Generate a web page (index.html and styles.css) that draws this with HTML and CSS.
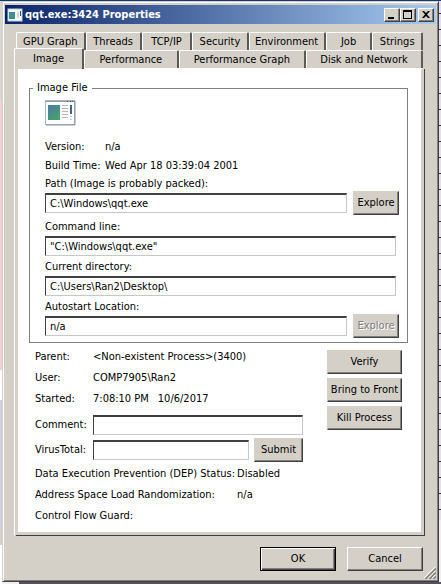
FILE: index.html
```html
<!DOCTYPE html>
<html lang="en">
<head>
<meta charset="utf-8">
<title>qqt.exe:3424 Properties</title>
<link rel="stylesheet" href="styles.css">
</head>
<body>
<main class="window">
  <header class="titlebar">
    <svg class="app-icon" width="16" height="14" viewBox="0 0 16 14" aria-hidden="true">
      <rect x="1" y="1" width="14" height="12" fill="#f7f8f8" stroke="#c9d0d8"/>
      <rect x="2" y="4" width="6" height="7" fill="#3f8f92"/>
      <path d="M10 5h2M10 7h2M10 9h2" stroke="#b5b5b5"/>
      <rect x="13" y="3" width="1" height="5" fill="#35517e"/>
    </svg>
    <h1 class="title">qqt.exe:3424 Properties</h1>
    <div class="caption-buttons">
      <button type="button" class="caption" aria-label="Minimize"><svg width="12" height="11" viewBox="0 0 12 11"><path d="M2 8h6v2H2z"/></svg></button>
      <button type="button" class="caption" aria-label="Maximize"><svg width="12" height="11" viewBox="0 0 12 11"><path fill-rule="evenodd" d="M1 1h9v9H1zM2 3v6h7V3z"/></svg></button>
      <button type="button" class="caption close" aria-label="Close"><svg width="12" height="11" viewBox="0 0 12 11"><path d="M2 2h2l2 2 2-2h2L7 5.500l3 3.500H8L6 7 4 9H2l3-3.500z"/></svg></button>
    </div>
  </header>
  <div class="content">
    <div class="tabs" role="tablist">
      <div class="tab-row back">
        <button type="button" role="tab" class="tab gpu">GPU Graph</button>
        <button type="button" role="tab" class="tab threads">Threads</button>
        <button type="button" role="tab" class="tab tcp">TCP/IP</button>
        <button type="button" role="tab" class="tab security">Security</button>
        <button type="button" role="tab" class="tab environment">Environment</button>
        <button type="button" role="tab" class="tab job">Job</button>
        <button type="button" role="tab" class="tab strings">Strings</button>
      </div>
      <div class="tab-row front">
        <button type="button" role="tab" class="tab image" aria-selected="true">Image</button>
        <button type="button" role="tab" class="tab performance">Performance</button>
        <button type="button" role="tab" class="tab perf-graph">Performance Graph</button>
        <button type="button" role="tab" class="tab disk">Disk and Network</button>
      </div>
    </div>
    <section class="page" role="tabpanel">
      <fieldset class="group">
        <legend>Image File</legend>
        <svg class="file-icon" width="32" height="27" viewBox="0 0 32 27" aria-hidden="true">
          <defs><linearGradient id="pic" x1="0" y1="0" x2="0.600" y2="1"><stop offset="0" stop-color="#4a7ba6"/><stop offset="1" stop-color="#45a06b"/></linearGradient></defs>
          <rect x="0.500" y="0.500" width="29" height="24" fill="#fbfcfc" stroke="#a9b2ba"/>
          <path d="M1 25h29V1" fill="none" stroke="#8d969e"/>
          <path d="M1 1.500h28" stroke="#8fa0ae"/>
          <path d="M22 1.500h1M25 1.500h1M27 1.500h1" stroke="#3f5468"/>
          <rect x="3" y="5" width="12" height="15" fill="url(#pic)"/>
          <path d="M17 5.500h6M17 8.500h6M17 11.500h6M17 14.500h6M17 17.500h6" stroke="#c6b4b4"/>
          <rect x="25" y="5" width="2" height="9" fill="#47648c"/>
          <path d="M25 16.500h2M25 19.500h2" stroke="#c4ccd4"/>
        </svg>
        <dl class="facts file-facts">
          <dt>Version:</dt><dd>n/a</dd>
          <dt>Build Time:</dt><dd>Wed Apr 18 03:39:04 2001</dd>
        </dl>
        <label for="path">Path (Image is probably packed):</label>
        <div class="field-row path-row"><input id="path" type="text" readonly value="C:\Windows\qqt.exe"><button type="button" class="btn flat">Explore</button></div>
        <label for="cmd">Command line:</label>
        <div class="field-row wide"><input id="cmd" type="text" readonly value="&quot;C:\Windows\qqt.exe&quot;"></div>
        <label for="dir">Current directory:</label>
        <div class="field-row wide"><input id="dir" type="text" readonly value="C:\Users\Ran2\Desktop\"></div>
        <label for="auto">Autostart Location:</label>
        <div class="field-row"><input id="auto" type="text" readonly value="n/a"><button type="button" class="btn flat" disabled>Explore</button></div>
      </fieldset>
      <div class="process">
        <div class="details">
          <dl class="facts">
            <dt>Parent:</dt><dd>&lt;Non-existent Process&gt;(3400)</dd>
            <dt>User:</dt><dd>COMP7905\Ran2</dd>
            <dt>Started:</dt><dd class="times"><span>7:08:10 PM</span><span>10/6/2017</span></dd>
          </dl>
          <div class="form">
            <div class="form-row"><label for="comment">Comment:</label><input id="comment" type="text"></div>
            <div class="form-row"><label for="vt">VirusTotal:</label><input id="vt" type="text"><button type="button" class="btn flat submit">Submit</button></div>
          </div>
        </div>
        <div class="actions">
          <button type="button" class="btn flat">Verify</button>
          <button type="button" class="btn flat">Bring to Front</button>
          <button type="button" class="btn flat">Kill Process</button>
        </div>
      </div>
      <dl class="facts security-facts">
        <dt>Data Execution Prevention (DEP) Status:</dt><dd>Disabled</dd>
        <dt>Address Space Load Randomization:</dt><dd>n/a</dd>
        <dt>Control Flow Guard:</dt><dd></dd>
      </dl>
    </section>
    <footer class="footer">
      <button type="button" class="btn default">OK</button>
      <button type="button" class="btn">Cancel</button>
    </footer>
  </div>
  <svg class="grip" width="12" height="12" viewBox="0 0 12 12" aria-hidden="true">
    <path d="M0 11L11 0M4 11l7-7M8 11l3-3" stroke="#fff"/>
    <path d="M1.500 12L12 1.500M5.500 12L12 5.500M9.500 12L12 9.500" stroke="#808080" stroke-width="1.500"/>
  </svg>
</main>
</body>
</html>
```
FILE: styles.css
```css
* { box-sizing: border-box; }

:root {
  --face: #d4d0c8;
  --shadow: #808080;
  --dark: #404040;
}

body {
  margin: 0;
  padding: 1px 2px 2px;
  min-height: 100vh;
  display: flex;
  font: 11px/14px "DejaVu Sans Condensed", "DejaVu Sans", sans-serif;
  color: #000;
  background:
    linear-gradient(#0b3c78, #0b3c78) top / 100% 1px no-repeat,
    linear-gradient(#55525a, #55525a) 19px 100% / 100% 2px no-repeat,
    repeating-linear-gradient(#e4dfea 0 13px, #333 13px 14px, #e4dfea 14px 16px) right top / 2px 520px no-repeat,
    linear-gradient(#d8d4d0 0 100px, #f2d0d4 100px 370px, #fff 370px 400px, #cfcde2 400px 528px, #d4d0c8 528px 545px, #fff 545px) left / 2px 100% no-repeat,
    #f0eeee;
}

button, input { font: inherit; color: inherit; border-radius: 0; }
h1, dl, dd, fieldset { margin: 0; }

.window {
  position: relative;
  flex: 1;
  display: flex;
  flex-direction: column;
  padding: 2px;
  background: var(--face);
  border: 1px solid;
  border-color: var(--face) var(--dark) var(--dark) var(--face);
  box-shadow: inset 1px 1px #fff, inset -1px -1px var(--shadow);
}

.titlebar {
  display: flex;
  align-items: center;
  height: 19px;
  margin-top: 1px;
  padding: 0 2px;
  gap: 2px;
  color: #fff;
  background: linear-gradient(90deg, #0a246a, #a6caf0);
}

.title { flex: 1; font: bold 11px/14px "DejaVu Sans Condensed", "DejaVu Sans", sans-serif; }
.caption-buttons { display: flex; }

.caption {
  width: 16px;
  height: 14px;
  padding: 0;
  display: flex;
  align-items: center;
  justify-content: center;
  background: var(--face);
  border: 1px solid;
  border-color: #fff var(--dark) var(--dark) #fff;
  box-shadow: inset -1px -1px var(--shadow);
}
.caption.close { margin-left: 2px; }

.content { flex: 1; display: flex; flex-direction: column; padding: 8px 12px 8px 9px; }

.tab-row { display: flex; height: 18px; padding: 0 1px 0 2px; }

.tab {
  padding: 0;
  text-align: center;
  background: var(--face);
  border: 1px solid;
  border-width: 1px 2px 0 1px;
  border-color: #fff #5c5a56 #fff #fff;
  border-radius: 2px 2px 0 0;
}

.gpu { flex: 70; }
.threads { flex: 56; }
.tcp { flex: 50; }
.security { flex: 56; }
.environment { flex: 78; }
.job { flex: 46; }
.strings { flex: 50; }
.front { padding-left: 0; }
.image { flex: 69; position: relative; z-index: 1; margin: -2px 0 -1px; }
.performance { flex: 94; }
.perf-graph { flex: 128; }
.disk { flex: 117; }

.page {
  flex: 1;
  margin: 0 0 0 1px;
  padding: 12px 13px 0 11px;
  background: #fff;
  border: 3px solid;
  border-color: #fff var(--face) var(--face) var(--face);
  border-top-width: 1px;
  box-shadow: 1px 1px var(--dark), -1px 0 #fff;
}

.group {
  min-width: 0;
  padding: 5px 8px 2px 15px;
  border: 1px solid var(--shadow);
  display: flex;
  flex-direction: column;
}
.group legend { padding: 0 4px; margin-left: -12px; }
.file-icon { margin-bottom: 13px; }

.facts { display: grid; grid-template-columns: 58px 1fr; row-gap: 7px; }
.file-facts { grid-template-columns: 60px 1fr; row-gap: 5px; margin-bottom: 4px; }

.field-row { display: flex; align-items: center; gap: 6px; height: 24px; margin-bottom: 2px; }
.path-row { margin-bottom: 5px; }
.wide { margin-right: 3px; }

input {
  flex: 1;
  min-width: 0;
  height: 20px;
  padding: 0 4px;
  background: #fff;
  border: 1px solid;
  border-color: var(--dark) #c8c8c8 #c8c8c8 var(--dark);
  border-top-width: 2px;
}

.btn {
  height: 24px;
  padding: 0;
  background: var(--face);
  border: 1px solid;
  border-color: #fff var(--dark) var(--dark) #fff;
  box-shadow: inset -1px -1px var(--shadow);
}
.btn.flat { min-width: 46px; border-color: var(--face) var(--dark) var(--dark) var(--face); }
.btn.submit { min-width: 49px; }
.btn.default { border-color: #000; box-shadow: inset 1px 1px #fff, inset -1px -1px var(--dark), inset -2px -2px var(--shadow); }
.btn:disabled { color: var(--shadow); text-shadow: 1px 1px #fff; }

.process { display: flex; justify-content: space-between; padding: 7px 6px 0; }
.details { width: 268px; }
.times { display: flex; gap: 9px; }
.form { margin-top: 7px; }
.form-row { display: flex; align-items: center; gap: 5px; height: 24px; margin-top: 1px; }
.form-row label { width: 53px; white-space: nowrap; }
.actions { display: flex; flex-direction: column; gap: 4px; width: 75px; }
.security-facts { grid-template-columns: max-content 1fr; column-gap: 2px; padding: 5px 6px 0; }

.footer { display: flex; justify-content: flex-end; gap: 11px; padding: 12px 1px 0; }
.footer .btn { width: 76px; }

.grip { position: absolute; right: 2px; bottom: 2px; }
```
